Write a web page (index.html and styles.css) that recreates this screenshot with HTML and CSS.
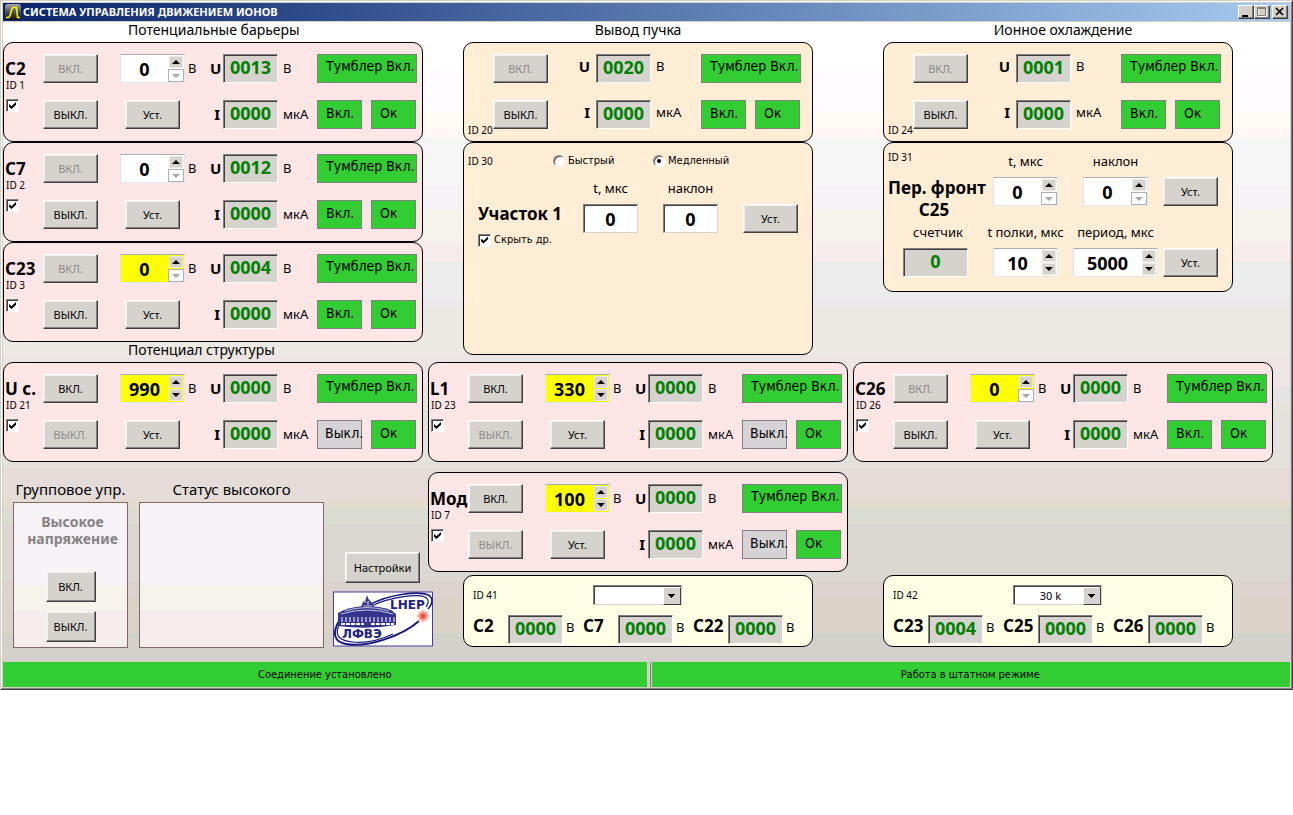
FILE: index.html
```html
<!DOCTYPE html>
<html lang="ru">
<head>
<meta charset="utf-8">
<title>СИСТЕМА УПРАВЛЕНИЯ ДВИЖЕНИЕМ ИОНОВ</title>
<link rel="stylesheet" href="styles.css">
</head>
<body>
<div class="window"><div class="frame">
<header class="titlebar">
  <svg class="app-icon" viewBox="0 0 16 16" aria-hidden="true"><defs><linearGradient id="ig" x1="0" y1="0" x2="0" y2="1"><stop offset="0" stop-color="#a8a8a8"/><stop offset="0.5" stop-color="#505050"/><stop offset="1" stop-color="#101010"/></linearGradient></defs><rect width="16" height="16" rx="3" fill="url(#ig)"/><path d="M1 13.500H3.500C6 13 6 3.500 8 3.500H11.500L12.500 13.500H15" fill="none" stroke="#ff0" stroke-width="1.500"/></svg>
  <h1 class="title">СИСТЕМА УПРАВЛЕНИЯ ДВИЖЕНИЕМ ИОНОВ</h1>
  <div class="winbtns">
    <button class="winbtn" aria-label="Свернуть"><svg viewBox="0 0 13 12"><path d="M3 9H9V11H3Z" fill="#000"/></svg></button>
    <button class="winbtn" aria-label="Развернуть" disabled><svg viewBox="0 0 13 12"><path d="M3 2.500H11V10.500H3Z" fill="none" stroke="#fff" stroke-width="1"/><path d="M2.500 2H10.500V9.500H2.500Z" fill="none" stroke="#808080"/><path d="M2 2H11" stroke="#808080" stroke-width="2"/></svg></button>
    <button class="winbtn winbtn-close" aria-label="Закрыть"><svg viewBox="0 0 13 12"><path d="M3 2L10 9M10 2L3 9" stroke="#000" stroke-width="1.700"/></svg></button>
  </div>
</header>

<main class="board">
<section class="column">
  <h2 class="heading heading-left">Потенциальные барьеры</h2>

  <div class="panel channel">
    <div class="ident"><b class="name">C2</b><small class="id">ID 1</small><input class="tick" type="checkbox" checked aria-label="C2"></div>
    <button class="btn on" disabled>ВКЛ.</button>
    <div class="spin"><input value="0" aria-label="C2, В"><div class="arrows"><button class="up" aria-label="Больше"></button><button class="down" disabled aria-label="Меньше"></button></div></div>
    <span class="unit volt">В</span>
    <b class="sym">U</b><output class="readout">0013</output><span class="unit">В</span>
    <div class="flags"><span class="flag wide">Тумблер Вкл.</span></div>
    <button class="btn off">ВЫКЛ.</button>
    <button class="btn set">Уст.</button>
    <b class="sym cur">I</b><output class="readout">0000</output><span class="unit">мкА</span>
    <div class="flags"><span class="flag">Вкл.</span><span class="flag">Ок</span></div>
  </div>

  <div class="panel channel">
    <div class="ident"><b class="name">C7</b><small class="id">ID 2</small><input class="tick" type="checkbox" checked aria-label="C7"></div>
    <button class="btn on" disabled>ВКЛ.</button>
    <div class="spin"><input value="0" aria-label="C7, В"><div class="arrows"><button class="up" aria-label="Больше"></button><button class="down" disabled aria-label="Меньше"></button></div></div>
    <span class="unit volt">В</span>
    <b class="sym">U</b><output class="readout">0012</output><span class="unit">В</span>
    <div class="flags"><span class="flag wide">Тумблер Вкл.</span></div>
    <button class="btn off">ВЫКЛ.</button>
    <button class="btn set">Уст.</button>
    <b class="sym cur">I</b><output class="readout">0000</output><span class="unit">мкА</span>
    <div class="flags"><span class="flag">Вкл.</span><span class="flag">Ок</span></div>
  </div>

  <div class="panel channel">
    <div class="ident"><b class="name">C23</b><small class="id">ID 3</small><input class="tick" type="checkbox" checked aria-label="C23"></div>
    <button class="btn on" disabled>ВКЛ.</button>
    <div class="spin changed"><input value="0" aria-label="C23, В"><div class="arrows"><button class="up" aria-label="Больше"></button><button class="down" disabled aria-label="Меньше"></button></div></div>
    <span class="unit volt">В</span>
    <b class="sym">U</b><output class="readout">0004</output><span class="unit">В</span>
    <div class="flags"><span class="flag wide">Тумблер Вкл.</span></div>
    <button class="btn off">ВЫКЛ.</button>
    <button class="btn set">Уст.</button>
    <b class="sym cur">I</b><output class="readout">0000</output><span class="unit">мкА</span>
    <div class="flags"><span class="flag">Вкл.</span><span class="flag">Ок</span></div>
  </div>

  <h2 class="heading heading-left">Потенциал структуры</h2>

  <div class="panel channel">
    <div class="ident"><b class="name">U с.</b><small class="id">ID 21</small><input class="tick" type="checkbox" checked aria-label="U с."></div>
    <button class="btn on">ВКЛ.</button>
    <div class="spin changed"><input value="990" aria-label="U с., В"><div class="arrows"><button class="up" aria-label="Больше"></button><button class="down" aria-label="Меньше"></button></div></div>
    <span class="unit volt">В</span>
    <b class="sym">U</b><output class="readout">0000</output><span class="unit">В</span>
    <div class="flags"><span class="flag wide">Тумблер Вкл.</span></div>
    <button class="btn off" disabled>ВЫКЛ.</button>
    <button class="btn set">Уст.</button>
    <b class="sym cur">I</b><output class="readout">0000</output><span class="unit">мкА</span>
    <div class="flags"><span class="flag idle">Выкл.</span><span class="flag">Ок</span></div>
  </div>

  <div class="lower">
    <section class="group">
      <h2 class="subheading">Групповое упр.</h2>
      <div class="box groupbox">
        <p class="grouptitle">Высокое напряжение</p>
        <button class="btn small">ВКЛ.</button>
        <button class="btn small">ВЫКЛ.</button>
      </div>
    </section>
    <section class="status-high">
      <h2 class="subheading">Статус высокого</h2>
      <div class="box"></div>
    </section>
    <div class="tools">
      <button class="btn settings">Настройки</button>
      <svg class="logo" viewBox="0 0 101 56" role="img" aria-label="LHEP ЛФВЭ">
        <defs><radialGradient id="flash"><stop offset="0" stop-color="#ff1010"/><stop offset="0.350" stop-color="#f08070"/><stop offset="1" stop-color="#fff" stop-opacity="0"/></radialGradient></defs>
        <rect x="0.500" y="1" width="99" height="54" fill="#fff" stroke="#4a3c96"/>
        <g fill="none" stroke="#18187c">
          <path d="M34 15C55 3 88 -1 97 5C101 9 98 15 95 18" stroke-width="1.600"/>
          <path d="M38 15C60 5 85 3 92 6C97 9 95 13 93 16" stroke-width="1.200"/>
          <path d="M6 30C-1 42 1 51 13 53C34 57 69 45 86 30" stroke-width="2"/>
          <path d="M6 34C1 45 7 50 20 51C36 53 49 48 60 43" stroke-width="1.200"/>
        </g>
        <g fill="#34348c">
          <path d="M34 4L35.500 8L39 12L41 16H28L30 11L33 8Z"/>
          <path d="M11 19Q34 11 58 19L63 23V26H5V22Z"/>
          <path d="M5 26H63V34Q34 39 5 35Z"/>
        </g>
        <g stroke="#fff" fill="none">
          <path d="M8 23Q34 15 60 23M12 20Q34 13 56 20M30 15H39" stroke-width="0.700"/>
          <path d="M9 26V31M13 26V31M17 26V31M21 26V31M25 26V31M29 26V31M33 26V31M37 26V31M41 26V31M45 26V31M49 26V31M53 26V31M57 26V31M61 26V31" stroke-width="1"/>
          <path d="M8 33H31M38 33H61" stroke-width="2" stroke-dasharray="4 1"/>
          <path d="M32 9V12M35 10V14" stroke-width="1"/>
        </g>
        <circle cx="90" cy="25" r="8" fill="url(#flash)"/>
        <path d="M90 18V32M83 25H97M85 20L95 30M95 20L85 30" stroke="#f06050" stroke-opacity="0.500" stroke-width="0.700"/>
        <text x="57" y="18" class="logo-text">LHEP</text>
        <text x="9" y="47" class="logo-text">ЛФВЭ</text>
      </svg>
    </div>
  </div>
</section>

<section class="column">
  <h2 class="heading">Вывод пучка</h2>

  <div class="panel beam side">
    <small class="id">ID 20</small>
    <button class="btn" disabled>ВКЛ.</button>
    <b class="sym">U</b><output class="readout">0020</output><span class="unit">В</span>
    <div class="flags"><span class="flag wide">Тумблер Вкл.</span></div>
    <button class="btn off">ВЫКЛ.</button>
    <b class="sym">I</b><output class="readout">0000</output><span class="unit">мкА</span>
    <div class="flags"><span class="flag">Вкл.</span><span class="flag">Ок</span></div>
  </div>

  <div class="panel side mode">
    <div class="moderow">
      <small class="id">ID 30</small>
      <label class="choice"><input type="radio" name="mode">Быстрый</label>
      <label class="choice"><input type="radio" name="mode" checked>Медленный</label>
    </div>
    <div class="segment">
      <label class="caption cap-t" for="seg-t">t, мкс</label>
      <label class="caption" for="seg-s">наклон</label>
      <b class="name segname">Участок 1</b>
      <input class="field" id="seg-t" value="0">
      <input class="field" id="seg-s" value="0">
      <button class="btn">Уст.</button>
    </div>
    <label class="choice hide"><input class="tick" type="checkbox" checked>Скрыть др.</label>
  </div>

  <div class="panel channel gap-s">
    <div class="ident"><b class="name">L1</b><small class="id">ID 23</small><input class="tick" type="checkbox" checked aria-label="L1"></div>
    <button class="btn on">ВКЛ.</button>
    <div class="spin changed"><input value="330" aria-label="L1, В"><div class="arrows"><button class="up" aria-label="Больше"></button><button class="down" aria-label="Меньше"></button></div></div>
    <span class="unit volt">В</span>
    <b class="sym">U</b><output class="readout">0000</output><span class="unit">В</span>
    <div class="flags"><span class="flag wide">Тумблер Вкл.</span></div>
    <button class="btn off" disabled>ВЫКЛ.</button>
    <button class="btn set">Уст.</button>
    <b class="sym cur">I</b><output class="readout">0000</output><span class="unit">мкА</span>
    <div class="flags"><span class="flag idle">Выкл.</span><span class="flag">Ок</span></div>
  </div>

  <div class="panel channel gap-m">
    <div class="ident"><b class="name">Мод</b><small class="id">ID 7</small><input class="tick" type="checkbox" checked aria-label="Мод"></div>
    <button class="btn on">ВКЛ.</button>
    <div class="spin changed"><input value="100" aria-label="Мод, В"><div class="arrows"><button class="up" aria-label="Больше"></button><button class="down" aria-label="Меньше"></button></div></div>
    <span class="unit volt">В</span>
    <b class="sym">U</b><output class="readout">0000</output><span class="unit">В</span>
    <div class="flags"><span class="flag wide">Тумблер Вкл.</span></div>
    <button class="btn off" disabled>ВЫКЛ.</button>
    <button class="btn set">Уст.</button>
    <b class="sym cur">I</b><output class="readout">0000</output><span class="unit">мкА</span>
    <div class="flags"><span class="flag idle">Выкл.</span><span class="flag">Ок</span></div>
  </div>

  <div class="panel side meter gap-xs">
    <div class="meterhead"><small class="id">ID 41</small><span class="select"><select aria-label="ID 41"><option></option><option>30 k</option></select></span></div>
    <div class="meterrow">
      <b class="name">C2</b><output class="readout">0000</output><span class="unit">В</span>
      <b class="name">C7</b><output class="readout">0000</output><span class="unit">В</span>
      <b class="name">C22</b><output class="readout">0000</output><span class="unit">В</span>
    </div>
  </div>
</section>

<section class="column column-right">
  <h2 class="heading">Ионное охлаждение</h2>

  <div class="panel beam side">
    <small class="id">ID 24</small>
    <button class="btn" disabled>ВКЛ.</button>
    <b class="sym">U</b><output class="readout">0001</output><span class="unit">В</span>
    <div class="flags"><span class="flag wide">Тумблер Вкл.</span></div>
    <button class="btn off">ВЫКЛ.</button>
    <b class="sym">I</b><output class="readout">0000</output><span class="unit">мкА</span>
    <div class="flags"><span class="flag">Вкл.</span><span class="flag">Ок</span></div>
  </div>

  <div class="panel side front">
    <small class="id">ID 31</small>
    <label class="caption" for="fr-t">t, мкс</label>
    <label class="caption inset" for="fr-s">наклон</label>
    <b class="name frontname">Пер. фронт<br>C25</b>
    <div class="spin row-a"><input id="fr-t" value="0"><div class="arrows"><button class="up" aria-label="Больше"></button><button class="down" disabled aria-label="Меньше"></button></div></div>
    <div class="spin row-a slope"><input id="fr-s" value="0"><div class="arrows"><button class="up" aria-label="Больше"></button><button class="down" disabled aria-label="Меньше"></button></div></div>
    <button class="btn row-a">Уст.</button>
    <span class="caption row-b">счетчик</span>
    <label class="caption row-b" for="fr-p">t полки, мкс</label>
    <label class="caption row-b inset" for="fr-c">период, мкс</label>
    <output class="readout row-c counter">0</output>
    <div class="spin row-c"><input id="fr-p" value="10"><div class="arrows"><button class="up" aria-label="Больше"></button><button class="down" aria-label="Меньше"></button></div></div>
    <div class="spin row-c period"><input id="fr-c" value="5000"><div class="arrows"><button class="up" aria-label="Больше"></button><button class="down" aria-label="Меньше"></button></div></div>
    <button class="btn row-c">Уст.</button>
  </div>

  <div class="panel channel gap-l">
    <div class="ident"><b class="name">C26</b><small class="id">ID 26</small><input class="tick" type="checkbox" checked aria-label="C26"></div>
    <button class="btn on" disabled>ВКЛ.</button>
    <div class="spin changed"><input value="0" aria-label="C26, В"><div class="arrows"><button class="up" aria-label="Больше"></button><button class="down" disabled aria-label="Меньше"></button></div></div>
    <span class="unit volt">В</span>
    <b class="sym">U</b><output class="readout">0000</output><span class="unit">В</span>
    <div class="flags"><span class="flag wide">Тумблер Вкл.</span></div>
    <button class="btn off">ВЫКЛ.</button>
    <button class="btn set">Уст.</button>
    <b class="sym cur">I</b><output class="readout">0000</output><span class="unit">мкА</span>
    <div class="flags"><span class="flag">Вкл.</span><span class="flag">Ок</span></div>
  </div>

  <div class="panel side meter gap-xl">
    <div class="meterhead"><small class="id">ID 42</small><span class="select"><select aria-label="ID 42"><option>30 k</option></select></span></div>
    <div class="meterrow">
      <b class="name">C23</b><output class="readout">0004</output><span class="unit">В</span>
      <b class="name">C25</b><output class="readout">0000</output><span class="unit">В</span>
      <b class="name">C26</b><output class="readout">0000</output><span class="unit">В</span>
    </div>
  </div>
</section>
</main>

<footer class="statusbar">
  <div class="statuscell">Соединение установлено</div>
  <div class="statuscell">Работа в штатном режиме</div>
</footer>
</div></div>
</body>
</html>
```
FILE: styles.css
```css
* { box-sizing: border-box; }

body {
  margin: 0;
  background: #fff;
  color: #000;
  font-family: Tahoma, "Noto Sans", "DejaVu Sans Condensed", sans-serif;
  font-size: 14px;
}

button, input, select, output { font-family: inherit; color: inherit; margin: 0; padding: 0; }
h1, h2, p { margin: 0; font-weight: normal; }

/* window frame */
.window {
  border: 1px solid;
  border-color: #d4d0c8 #404040 #404040 #d4d0c8;
  min-width: 1293px;
}
.frame {
  border: 1px solid;
  border-color: #fff #808080 #808080 #fff;
  padding: 1px;
  background: #d4d0c8;
}

.titlebar {
  display: flex;
  align-items: center;
  height: 18px;
  padding: 0 2px;
  margin-bottom: 1px;
  background: linear-gradient(90deg, #0a246a, #a6caf0);
}
.app-icon { width: 16px; height: 16px; flex: none; }
.title {
  flex: 1;
  margin-left: 2px;
  color: #fff;
  font-size: 11px;
  font-weight: bold;
  line-height: 16px;
}
.winbtns { display: flex; }
.winbtn {
  display: block;
  width: 16px;
  height: 14px;
  border: 1px solid;
  border-color: #fff #404040 #404040 #fff;
  box-shadow: inset -1px -1px #808080;
  background: #d4d0c8;
}
.winbtn svg { display: block; width: 13px; height: 12px; }
.winbtn-close { margin-left: 2px; }

/* work area */
.board {
  display: grid;
  grid-template-columns: repeat(3, 1fr);
  column-gap: 5px;
  padding: 0 17px 14px 0;
  background: linear-gradient(
    #fff 48px, #fffcff 48px 90px, #fffcf6 90px 106px, #fff6f6 106px 116px,
    #f6f6f6 116px 163px, #f6f2f6 163px 187px, #f6f2ec 187px 219px, #f6ecec 219px 239px,
    #ececec 239px 276px, #ece8ec 276px 284px, #ece8e4 284px 332px, #ede4e4 332px 365px,
    #e4e4e4 365px 380px, #e4e4da 380px 389px, #e4e1dc 389px 446px, #e5dcda 446px 477px,
    #e4dccf 477px 486px, #dadcd2 486px 502px, #dbd8d3 502px 559px, #dcd3d0 559px 575px,
    #dcd3c8 575px 611px, #d0d3c8 611px 616px, #d4d1cc 616px);
}
.column { display: flex; flex-direction: column; }
.heading {
  height: 20px;
  font-size: 14px;
  line-height: 16px;
  text-align: center;
}
.heading-left { padding-left: 125px; text-align: left; }

.panel {
  border: 1px solid #000;
  border-radius: 10px;
  background: #ffe6e6;
}
.side { width: 350px; margin-left: 35px; background: #ffedd6; }
.column-right .side { margin-left: 30px; }
.gap-xs { margin-top: 3px; }
.gap-s { margin-top: 7px; }
.gap-m { margin-top: 10px; }
.gap-l { margin-top: 70px; }
.gap-xl { margin-top: 113px; }

/* shared controls */
.btn {
  height: 29px;
  min-width: 55px;
  border: 1px solid;
  border-color: #fff #404040 #404040 #fff;
  box-shadow: inset -1px -1px #808080, inset 1px 1px #f0eeea;
  background: #d6d3ce;
  font-size: 11px;
}
.btn:disabled { color: #8c8986; }
.btn.small { min-width: 50px; height: 31px; }
.btn.settings { width: 75px; height: 31px; }

.spin {
  display: flex;
  height: 29px;
  border: 1px solid;
  border-color: #abadb3 #e3e9ef #e3e9ef #e2e3ea;
  background: #fff;
}
.spin input {
  flex: 1;
  width: 0;
  border: 0;
  background: none;
  font-size: 18px;
  font-weight: bold;
  text-align: center;
}
.spin.changed { background: #ff0; }
.arrows { display: flex; flex-direction: column; align-items: center; gap: 1px; width: 16px; padding-top: 1px; }
.arrows button {
  display: grid;
  place-items: center;
  width: 14px;
  height: 12px;
  border: 1px solid #ece9e4;
  background: #d6d3ce;
}
.arrows button::before {
  content: "";
  border: 4px solid transparent;
  border-top-width: 0;
  border-bottom: 4px solid #000;
}
.arrows .down::before { border-bottom: 0; border-top: 4px solid #000; }
.arrows .down:disabled { width: 16px; height: 13px; border-color: #b0b0b0; background: #fff; }
.arrows .down:disabled::before { border-top-color: #a8a8a8; }

.readout {
  height: 29px;
  border: 1px solid;
  border-color: #808080 #fff #fff #808080;
  box-shadow: inset 1px 1px #404040;
  background: #d6d3ce;
  color: #008000;
  font-size: 18px;
  font-weight: bold;
  line-height: 25px;
  text-align: center;
}
.field {
  width: 55px;
  height: 29px;
  border: 1px solid;
  border-color: #808080 #d6d3ce #d6d3ce #808080;
  box-shadow: inset 1px 1px #404040;
  background: #fff;
  font-size: 18px;
  font-weight: bold;
  text-align: center;
}
.flags { display: flex; gap: 9px; }
.flag {
  width: 45px;
  height: 29px;
  padding-left: 8px;
  border: 1px solid #808080;
  background: #32cd32;
  font-family: Tahoma, "DejaVu Sans Condensed", sans-serif;
  font-size: 14px;
  line-height: 25px;
  white-space: nowrap;
}
.flag.wide { width: 100px; line-height: 23px; }
.flag.idle { background: #d6d3d6; padding-left: 7px; }

.name { font-size: 17px; line-height: 20px; white-space: nowrap; }
.id { font-size: 10px; line-height: 12px; }
.unit { padding-left: 5px; font-size: 13px; line-height: 28px; }
.sym { padding-right: 3px; font-size: 15px; line-height: 28px; text-align: right; }

.tick {
  appearance: none;
  display: grid;
  place-items: center;
  flex: none;
  width: 13px;
  height: 13px;
  border: 1px solid;
  border-color: #808080 #fff #fff #808080;
  box-shadow: inset 1px 1px #404040;
  background: #fff;
}
.tick:checked::before {
  content: "";
  width: 7px;
  height: 7px;
  background: #000;
  clip-path: polygon(0 30%, 35% 62%, 100% 0, 100% 40%, 35% 100%, 0 68%);
}

/* channel with a set-point */
.channel {
  display: grid;
  grid-template-columns: 39px 77px 65px 25px 13px 55px 39px 100px;
  grid-template-rows: 29px 29px;
  row-gap: 17px;
  height: 100px;
  padding-top: 11px;
}
.ident {
  display: flex;
  flex-direction: column;
  grid-row: 1 / 3;
  width: 0;
  padding: 5px 0 0 1px;
  white-space: nowrap;
}
.ident .id { margin: 0 0 8px 1px; }
.ident .tick { margin-left: 1px; }
.channel .on, .channel .off { justify-self: start; }
.channel .off { grid-column: 2; }
.channel .set { justify-self: center; }
.channel .cur { grid-column: 5; }
.channel .volt { padding-left: 3px; }

/* channel without a set-point */
.beam {
  display: grid;
  grid-template-columns: 29px 85px 18px 55px 50px 100px;
  grid-template-rows: 29px 29px;
  row-gap: 17px;
  height: 100px;
  padding-top: 11px;
}
.beam .id { grid-row: 2; grid-column: 1; align-self: end; margin: 0 0 -7px 4px; white-space: nowrap; }
.beam .btn { grid-column: 2; justify-self: start; }
.beam .sym { padding-right: 6px; line-height: 25px; }
.beam .unit { line-height: 25px; }

/* extraction mode */
.mode { height: 213px; padding-top: 9px; }
.moderow { display: grid; grid-template-columns: 85px 100px 100px; align-items: center; padding-left: 4px; height: 18px; }
.choice {
  display: flex;
  align-items: center;
  gap: 3px;
  font-family: Tahoma, "DejaVu Sans Condensed", sans-serif;
  font-size: 11px;
  line-height: 14px;
}
.choice input[type="radio"] {
  appearance: none;
  display: grid;
  place-items: center;
  width: 12px;
  height: 12px;
  border: 1px solid;
  border-color: #808080 #fff #fff #808080;
  border-radius: 50%;
  box-shadow: inset 1px 1px #606060;
  background: #fff;
}
.choice input[type="radio"]:checked::before { content: ""; width: 4px; height: 4px; border-radius: 50%; background: #000; }
.segment {
  display: grid;
  grid-template-columns: 80px 55px 55px 55px;
  grid-template-rows: 20px 29px;
  gap: 6px 25px;
  padding: 8px 0 0 14px;
}
.cap-t { grid-column: 2; }
.segname { grid-column: 1; }
.caption { font-size: 13px; line-height: 20px; text-align: center; white-space: nowrap; }
.hide { margin-left: 14px; }

/* front shaping */
.front {
  display: grid;
  grid-template-columns: 100px 65px 95px 55px;
  grid-template-rows: 20px 29px 4px 20px 29px;
  gap: 6px 5px;
  height: 150px;
  padding: 8px 0 0 4px;
}
.frontname { grid-row: 2 / 4; width: 92px; line-height: 22px; text-align: center; }
.row-a { grid-row: 2; }
.row-b { grid-row: 4; margin: 0 -10px; }
.row-c { grid-row: 5; }
.slope { width: 65px; margin-left: 20px; }
.period { margin-left: 10px; }
.caption.inset { padding-left: 10px; }
.counter { width: 65px; margin-left: 15px; }

/* divider read-back */
.meter { height: 72px; padding-top: 9px; background: #ffffe6; }
.meterhead { display: flex; align-items: center; height: 20px; padding-left: 9px; }
.meterhead .id { width: 120px; }
.select { display: grid; position: relative; width: 89px; height: 20px; }
.select select {
  appearance: none;
  border: 1px solid;
  border-color: #808080 #d6d3ce #d6d3ce #808080;
  box-shadow: inset 1px 1px #404040;
  border-radius: 0;
  padding-right: 14px;
  background: #fff;
  font-size: 11px;
  text-align: center;
  text-align-last: center;
}
.select::after {
  content: "";
  position: absolute;
  top: 2px;
  right: 1px;
  width: 16px;
  height: 16px;
  border: 1px solid;
  border-color: #fff #404040 #404040 #fff;
  background: linear-gradient(#000, #000) 4px 6px / 7px 1px no-repeat, linear-gradient(#000, #000) 5px 7px / 5px 1px no-repeat, linear-gradient(#000, #000) 6px 8px / 3px 1px no-repeat, linear-gradient(#000, #000) 7px 9px / 1px 1px no-repeat, #d6d3ce;
  pointer-events: none;
}
.meterrow { display: grid; grid-template-columns: repeat(3, 35px 55px 20px); padding: 10px 0 0 9px; }
.meterrow .name { line-height: 22px; }
.meterrow .unit { line-height: 24px; padding-left: 3px; }

/* group control */
.lower { display: flex; height: 168px; margin: 18px -11px 0 10px; }
.subheading {
  height: 22px;
  font-size: 15px;
  line-height: 18px;
  text-align: center;
  white-space: nowrap;
}
.group { width: 115px; margin-right: 11px; }
.status-high { width: 185px; }
.box {
  height: 146px;
  border: 1px solid #806868;
  background: linear-gradient(#f6f2f6 82px, #f6f2ec 82px 107px, #f6ecec 107px);
}
.groupbox { display: flex; flex-direction: column; align-items: center; gap: 9px; padding-top: 10px; }
.grouptitle {
  width: 92px;
  height: 34px;
  margin: 0 0 15px 4px;
  color: #848284;
  font-size: 14px;
  font-weight: bold;
  line-height: 17px;
  text-align: center;
}
.tools { display: flex; flex-direction: column; flex: 1; padding: 72px 0 0 9px; }
.tools .settings { margin-left: 12px; }
.logo { width: 101px; height: 56px; margin-top: 8px; }
.logo-text { font: bold 12px "DejaVu Sans", sans-serif; fill: #22227f; }

/* status bar */
.statusbar { display: grid; grid-template-columns: 1fr 1fr; }
.statuscell {
  height: 25px;
  background: #32cd32;
  font-family: Tahoma, "DejaVu Sans Condensed", sans-serif;
  font-size: 11px;
  line-height: 26px;
  text-align: center;
}
.statuscell + .statuscell { border-left: 1px solid #808080; margin-left: 3px; box-shadow: inset 1px 0 #d4d0c8; }
```
